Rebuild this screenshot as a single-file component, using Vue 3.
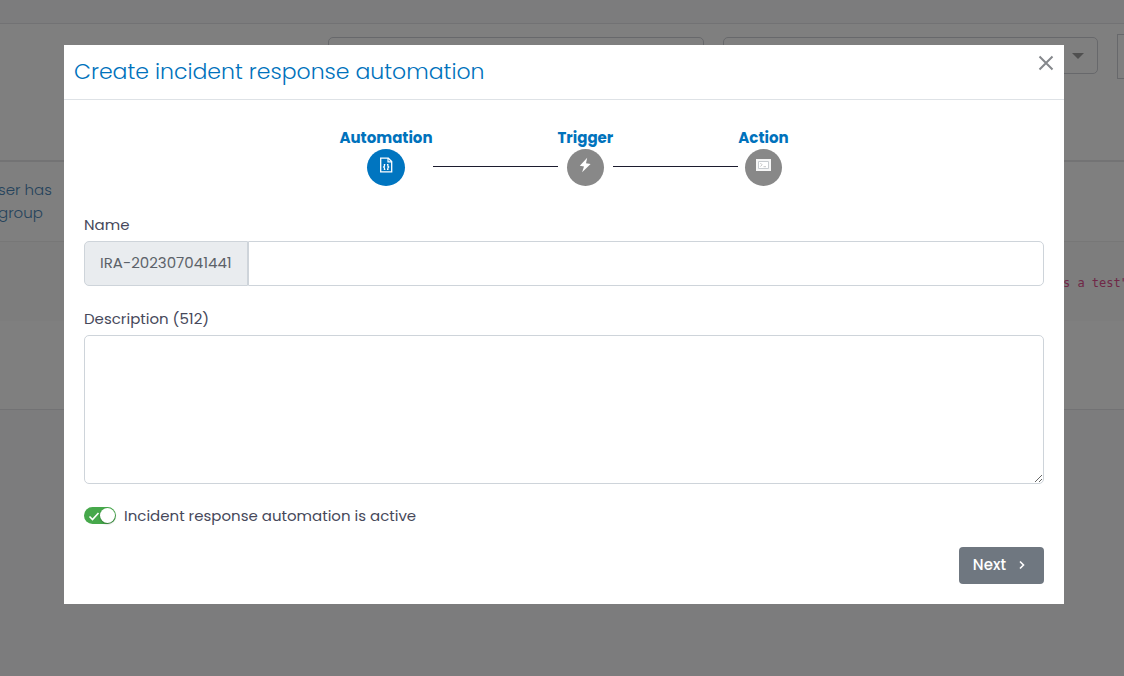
<script setup>
import { ref } from 'vue'

const name = ref('')
const description = ref('')
const active = ref(true)
</script>

<template>
  <div class="page">
    <main class="panel" aria-hidden="true" inert>
      <div class="filters">
        <div class="filter"><select aria-label="Status"></select></div>
        <div class="filter">
          <select aria-label="Type"></select>
          <svg viewBox="0 0 12 6" width="12" height="6"><path d="M0 0h12L6 6z" fill="#a0a0a0" /></svg>
        </div>
        <button class="tool" type="button" aria-label="Options"></button>
      </div>
      <table class="rules">
        <thead>
          <tr><th></th><th></th></tr>
        </thead>
        <tbody>
          <tr class="row">
            <td><a class="rule-link" href="#">ser has<br>group</a></td>
            <td></td>
          </tr>
          <tr class="row striped">
            <td></td>
            <td class="code-cell"><code>s a test"</code></td>
          </tr>
          <tr class="row last"><td></td><td></td></tr>
        </tbody>
      </table>
    </main>
  </div>

  <div class="overlay">
    <section class="modal" role="dialog" aria-modal="true" aria-labelledby="modal-title">
      <header class="modal-head">
        <h1 id="modal-title">Create incident response automation</h1>
        <button class="close" type="button" aria-label="Close">
          <svg viewBox="0 0 16 16" width="16" height="16"><path d="M1.5 1.5l13 13M14.5 1.5l-13 13" fill="none" stroke="#85888c" stroke-width="2" /></svg>
        </button>
      </header>

      <form class="modal-body" @submit.prevent>
        <div class="steps">
          <div class="step">
            <span class="step-name">Automation</span>
            <span class="dot current">
              <svg viewBox="0 0 16 16" width="16" height="16" fill="none" stroke="#fff">
                <path d="M2.7 1.2h7.6l3.4 3.4v10.2h-11z" stroke-width="1.3" />
                <path d="M10 1v3.8h3.8" stroke-width="1.2" />
                <path d="M7.3 7.6H6.4v1.7L5.6 10l.8.7v1.7h.9M9 7.6h.9v1.7l.8.7-.8.7v1.7H9" stroke-width="1.2" />
              </svg>
            </span>
          </div>
          <span class="line"></span>
          <div class="step">
            <span class="step-name">Trigger</span>
            <span class="dot">
              <svg viewBox="0 0 16 16" width="16" height="16"><path d="M10.2.8L2.8 8.8l4.2.7-1.9 5.7 8.5-8.3-4.6-.6z" fill="#fff" /></svg>
            </span>
          </div>
          <span class="line"></span>
          <div class="step">
            <span class="step-name">Action</span>
            <span class="dot">
              <svg viewBox="0 0 16 16" width="16" height="16">
                <path d="M1 2h15v12H1z" fill="#f6f6f6" />
                <path d="M3.5 4.5h10v7h-10z" fill="#fff" stroke="#c8ccd0" />
                <path d="M5.3 6l1.8 1.8-1.8 1.8M8.5 9.7h2.5" fill="none" stroke="#b8b8b8" stroke-width=".8" />
              </svg>
            </span>
          </div>
        </div>

        <div class="field">
          <label for="ira-name">Name</label>
          <div class="group">
            <span class="prefix">IRA-202307041441</span>
            <input id="ira-name" v-model="name" type="text">
          </div>
        </div>

        <div class="field">
          <label for="ira-description">Description (512)</label>
          <textarea id="ira-description" v-model="description" maxlength="512"></textarea>
        </div>

        <label class="switch" for="ira-active">
          <input id="ira-active" v-model="active" type="checkbox">
          <span class="track">
            <svg viewBox="0 0 12 12" width="12" height="12"><path d="M1.5 6.5l3 3 6-6.5" fill="none" stroke="#fff" stroke-width="1.6" /></svg>
            <span class="knob"></span>
          </span>
          <span>Incident response automation is active</span>
        </label>

        <footer class="actions">
          <button class="next" type="submit">
            Next
            <svg viewBox="0 0 8 10" width="8" height="10"><path d="M2 1.5L5.5 5 2 8.5" fill="none" stroke="#fff" stroke-width="1.6" /></svg>
          </button>
        </footer>
      </form>
    </section>
  </div>
</template>

<style>
body {
  background: #f8f8fb;
}
</style>

<style scoped>
* {
  box-sizing: border-box;
}

.page,
.overlay {
  font-family: Poppins, Inter, "Open Sans", sans-serif;
  font-size: 15px;
  font-weight: 400;
  line-height: 23px;
  color: #46485a;
}

.page {
  min-height: 100vh;
  padding-top: 23px;
  overflow: hidden;
}

.panel {
  background: #fff;
  border-top: 1px solid #e4e4e8;
  border-bottom: 1px solid #e4e4e8;
}

.filters {
  display: grid;
  grid-template-columns: 1fr 1fr 7px;
  column-gap: 19px;
  height: 136px;
  padding: 13px 0 0 328px;
}

.filter {
  display: flex;
  align-items: center;
  height: 37px;
  padding-right: 13px;
  border: 1px solid #ced0d6;
  border-radius: 5px;
}

.filter select {
  flex: 1;
  min-width: 0;
  height: 35px;
  appearance: none;
  border: 0;
  background: none;
}

.tool {
  height: 45px;
  margin-top: -3px;
  padding: 0;
  border: 1px solid #ced0d6;
  border-right: 0;
  background: #fff;
}

.rules {
  width: 100%;
  border-collapse: collapse;
  table-layout: fixed;
}

.rules th {
  height: 0;
  padding: 0;
  border-bottom: 2px solid #e6e6e8;
}

.row td {
  height: 80px;
  padding: 0;
}

.row.striped {
  background: #fafafa;
  border-top: 1px solid #eee;
}

.row.last td {
  height: 88px;
}

.rule-link {
  display: block;
  margin-left: -2px;
  font-weight: 300;
  color: #4a86b8;
  text-decoration: none;
}

.code-cell {
  text-align: right;
  white-space: nowrap;
}

.code-cell code {
  margin-right: -4px;
  font: 12px/18px "DejaVu Sans Mono", monospace;
  color: #e0508f;
}

.overlay {
  position: absolute;
  inset: 0;
  padding: 45px 60px 45px 64px;
  background: rgba(0, 0, 0, 0.5);
}

.modal {
  background: #fff;
}

.modal-head {
  display: flex;
  justify-content: space-between;
  align-items: flex-start;
  padding: 10px;
  border-bottom: 1px solid #dee2e6;
}

h1 {
  margin: 0;
  font-size: 22px;
  line-height: 34px;
  font-weight: 300;
  color: #0072bc;
}

.close {
  display: flex;
  padding: 0;
  border: 0;
  background: none;
}

.modal-body {
  padding: 26px 20px 20px;
}

.steps {
  display: flex;
  justify-content: center;
  align-items: flex-start;
}

.step {
  display: flex;
  flex-direction: column;
  align-items: center;
}

.step-name {
  font-weight: 700;
  color: #0072bc;
}

.dot {
  display: flex;
  justify-content: center;
  width: 37px;
  height: 37px;
  padding-top: 8px;
  border-radius: 50%;
  background: #888;
}

.dot.current {
  width: 38px;
  background: #0075c0;
}

.line {
  width: 125px;
  height: 1px;
  margin-top: 40px;
  background: #1c1c2e;
}

.field {
  margin-top: 27px;
}

.field + .field {
  margin-top: 21px;
}

.field > label {
  display: block;
  margin-bottom: 5px;
}

.group {
  display: flex;
  height: 45px;
}

.prefix {
  display: flex;
  align-items: center;
  padding: 0 15px 2px;
  border: 1px solid #ced4da;
  border-radius: 5px 0 0 5px;
  background: #e9ecef;
  color: #5c6269;
}

.group input {
  flex: 1;
  min-width: 0;
  padding: 0 12px;
  border: 1px solid #ced4da;
  border-radius: 0 5px 5px 0;
  font: inherit;
}

textarea {
  display: block;
  width: 100%;
  height: 149px;
  padding: 8px 12px;
  border: 1px solid #ced4da;
  border-radius: 5px;
  font: inherit;
  resize: vertical;
}

.switch {
  position: relative;
  display: flex;
  align-items: center;
  gap: 8px;
  margin-top: 20px;
}

.switch input {
  position: absolute;
  width: 32px;
  height: 17px;
  margin: 0;
  opacity: 0;
}

.track {
  display: flex;
  align-items: center;
  justify-content: space-between;
  width: 32px;
  height: 17px;
  padding: 0 1px 0 4px;
  border-radius: 9px;
  background: #46a84b;
}

.knob {
  width: 15px;
  height: 15px;
  border-radius: 50%;
  background: #fff;
  box-shadow: 0 1px 2px rgba(0, 0, 0, 0.3);
}

.actions {
  display: flex;
  justify-content: flex-end;
  margin-top: 20px;
}

.next {
  display: flex;
  align-items: center;
  gap: 12px;
  height: 37px;
  padding: 0 18px 2px 14px;
  border: 0;
  border-radius: 4px;
  background: #6f7780;
  color: #fff;
  font: inherit;
  font-weight: 500;
}
</style>
